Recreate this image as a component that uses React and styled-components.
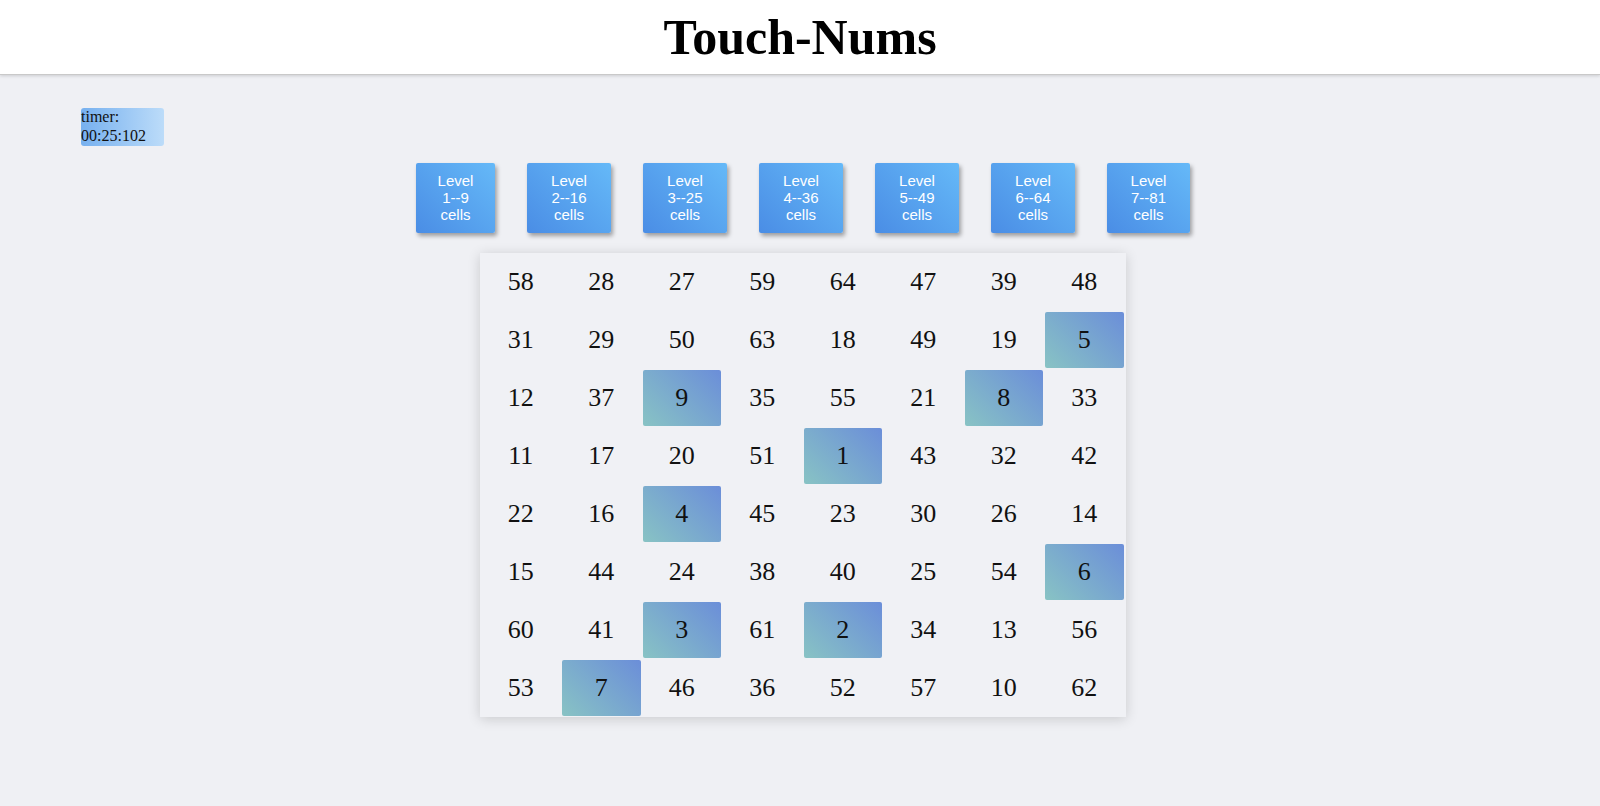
import React from 'react';
import styled, { createGlobalStyle } from 'styled-components';

const GlobalStyle = createGlobalStyle`
  body {
    margin: 0;
    min-height: 806px;
    background: #eff0f4;
    font-family: "Liberation Serif", "Times New Roman", serif;
    color: #111;
  }
`;

const Header = styled.header`
  height: 74px;
  display: flex;
  align-items: center;
  justify-content: center;
  background: #fff;
  border-bottom: 1px solid #c9c9c9;
  box-shadow: 0 1px 3px rgba(0, 0, 0, 0.15);
`;

const Title = styled.h1`
  margin: 0;
  font-family: "Liberation Serif", "Times New Roman", serif;
  font-size: 50px;
  font-weight: 700;
  color: #000;
`;

const Timer = styled.div`
  width: 83px;
  height: 38px;
  margin: 33px 0 0 81px;
  font-size: 16px;
  line-height: 18.5px;
  color: #111;
  border-radius: 3px;
  background: linear-gradient(to right, #76b0ef, #bcdcf9);
`;

const Main = styled.main`
  display: flex;
  flex-direction: column;
  align-items: center;
  padding: 0 0 40px 6px;
`;

const Levels = styled.div`
  display: flex;
  gap: 32px;
  margin-top: 17px;
`;

const LevelButton = styled.button`
  width: ${p => p.$width}px;
  height: 70px;
  padding: 8px 0 9px;
  border: 0;
  border-radius: 2px;
  background: linear-gradient(45deg, #4a8de5, #65b9f8);
  box-shadow: 2px 3px 4px rgba(0, 0, 0, 0.35);
  color: #fff;
  font-family: "Liberation Sans", Arial, sans-serif;
  font-size: 15px;
  line-height: 17px;
  text-align: center;
  cursor: pointer;
`;

const Board = styled.div`
  display: grid;
  grid-template-columns: repeat(8, 78.5px);
  grid-auto-rows: 56px;
  gap: 2px;
  margin-top: 20px;
  padding: 1px 2.5px 1px 1.5px;
  background: #f0f1f5;
  box-shadow: 0 2px 12px rgba(0, 0, 0, 0.16);
`;

const Cell = styled.div`
  display: flex;
  align-items: center;
  justify-content: center;
  font-size: 26px;
  color: #111;
  border-radius: 2px;
  background: ${p => (p.$found ? 'linear-gradient(45deg, #88c3c4, #6b8ed9)' : 'transparent')};
`;

const levels = [
  { n: 1, cells: 9, width: 79 },
  { n: 2, cells: 16, width: 84 },
  { n: 3, cells: 25, width: 84 },
  { n: 4, cells: 36, width: 84 },
  { n: 5, cells: 49, width: 84 },
  { n: 6, cells: 64, width: 84 },
  { n: 7, cells: 81, width: 83 },
];

const numbers = [
  58, 28, 27, 59, 64, 47, 39, 48,
  31, 29, 50, 63, 18, 49, 19, 5,
  12, 37, 9, 35, 55, 21, 8, 33,
  11, 17, 20, 51, 1, 43, 32, 42,
  22, 16, 4, 45, 23, 30, 26, 14,
  15, 44, 24, 38, 40, 25, 54, 6,
  60, 41, 3, 61, 2, 34, 13, 56,
  53, 7, 46, 36, 52, 57, 10, 62,
];

const found = 9;

export default function App() {
  return (
    <>
      <GlobalStyle />
      <Header>
        <Title>Touch-Nums</Title>
      </Header>
      <Timer>
        timer:
        <br />
        00:25:102
      </Timer>
      <Main>
        <Levels>
          {levels.map(l => (
            <LevelButton key={l.n} $width={l.width}>
              Level
              <br />
              {l.n}--{l.cells}
              <br />
              cells
            </LevelButton>
          ))}
        </Levels>
        <Board>
          {numbers.map(num => (
            <Cell key={num} $found={num <= found}>
              {num}
            </Cell>
          ))}
        </Board>
      </Main>
    </>
  );
}
